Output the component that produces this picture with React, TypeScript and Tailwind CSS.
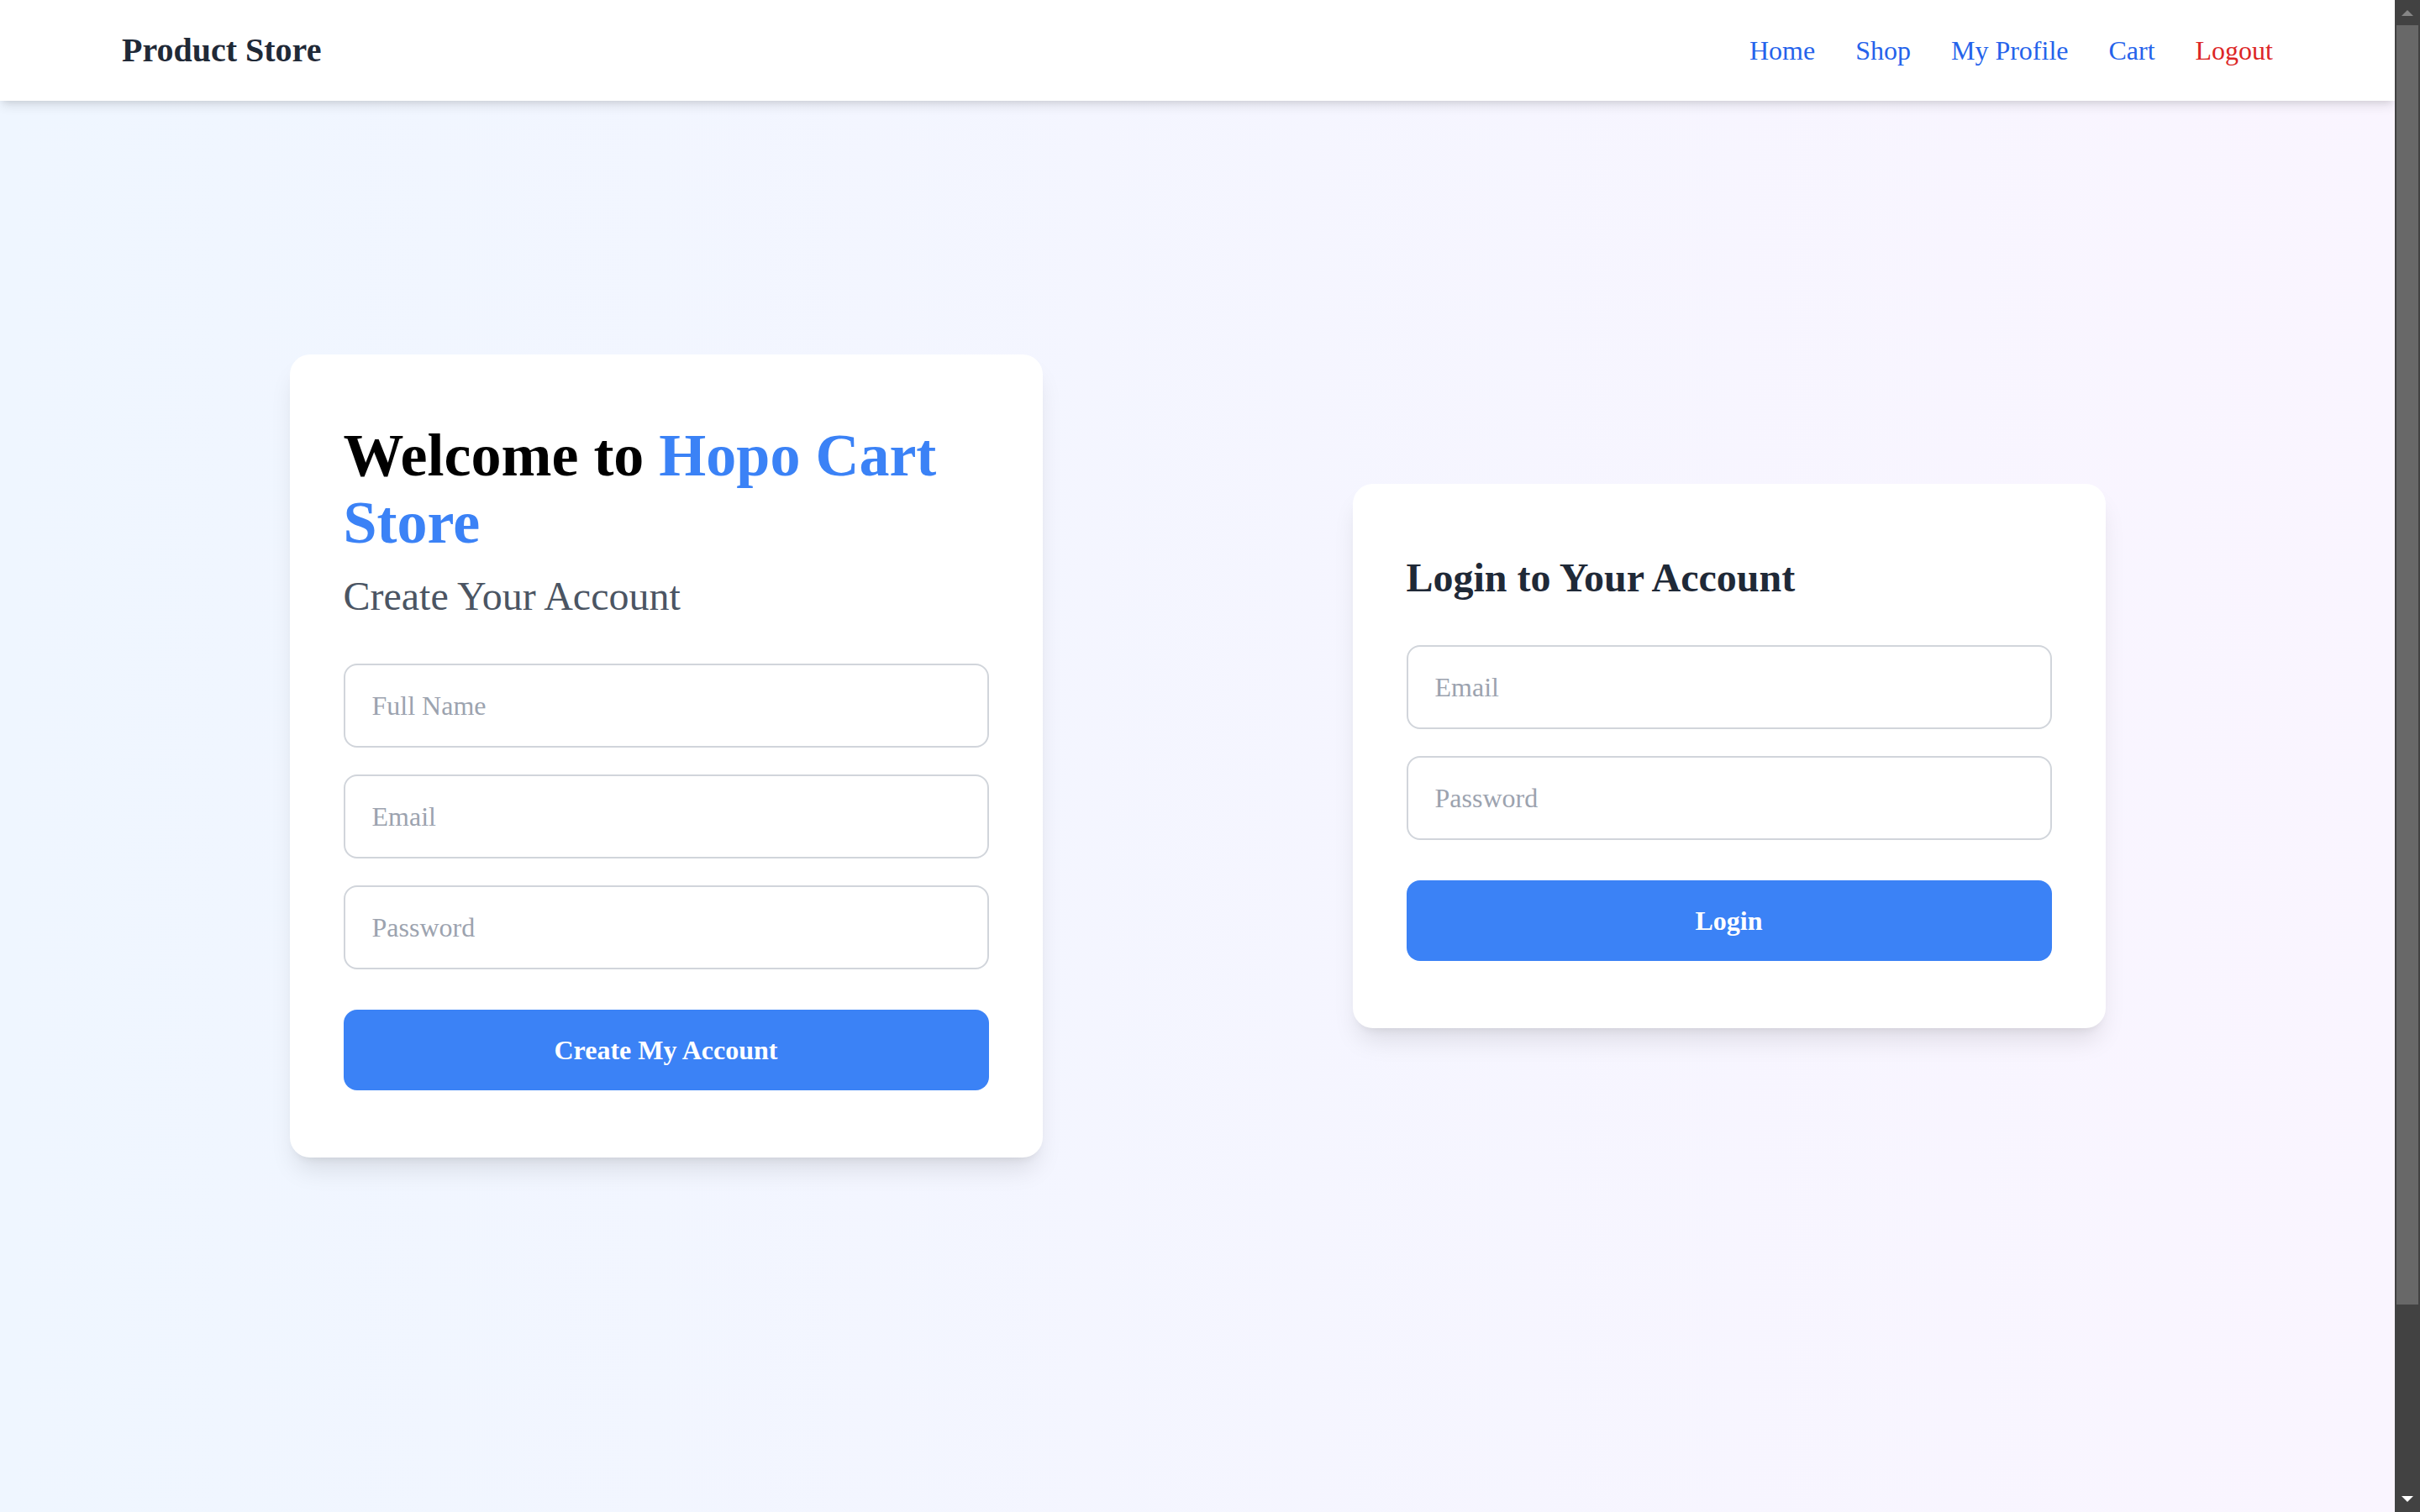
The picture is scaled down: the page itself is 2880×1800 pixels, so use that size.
import type { ReactNode } from "react";

type FieldProps = {
  label: string;
  type: "text" | "email" | "password";
};

const links = ["Home", "Shop", "My Profile", "Cart"];

function Field({ label, type }: FieldProps) {
  return (
    <input
      type={type}
      aria-label={label}
      placeholder={label}
      className="block w-full rounded-2xl border-2 border-[#d1d5db] bg-white px-8 py-6 text-[32px] leading-[48px] text-black placeholder:text-[#9ca3af] focus:border-[#3b82f6] focus:outline-none"
    />
  );
}

function SubmitButton({ children }: { children: string }) {
  return (
    <button
      type="submit"
      className="mt-4 w-full cursor-pointer rounded-2xl bg-[#3b82f6] py-6 text-[32px] leading-[48px] font-semibold text-white hover:bg-[#2563eb]"
    >
      {children}
    </button>
  );
}

function Card({ children }: { children: ReactNode }) {
  return (
    <section className="w-full max-w-4xl justify-self-center rounded-3xl bg-white px-16 py-20 shadow-[0_20px_30px_-6px_rgba(0,0,0,0.1),0_8px_12px_-8px_rgba(0,0,0,0.1)]">
      {children}
    </section>
  );
}

function Header() {
  return (
    <header className="bg-white shadow-[0_8px_12px_-2px_rgba(0,0,0,0.1),0_4px_8px_-4px_rgba(0,0,0,0.1)]">
      <div className="mx-auto flex max-w-[2560px] items-center justify-between py-8">
        <div className="text-[40px] leading-[56px] font-bold text-[#1f2937]">Product Store</div>
        <nav className="flex items-center gap-12 text-[32px] leading-[48px]">
          {links.map((link) => (
            <a key={link} href="#" className="text-[#2563eb] hover:underline">
              {link}
            </a>
          ))}
          <button type="button" className="cursor-pointer text-[#dc2626] hover:underline">
            Logout
          </button>
        </nav>
      </div>
    </header>
  );
}

function Scrollbar() {
  return (
    <div aria-hidden="true" className="sticky top-0 flex h-screen w-[30px] shrink-0 flex-col bg-[#424242]">
      <div className="flex h-[30px] items-center justify-center">
        <svg width="14" height="8" viewBox="0 0 14 8" className="fill-[#868686]">
          <path d="M7 1 14 8H0Z" />
        </svg>
      </div>
      <div className="flex-1 px-0.5">
        <div className="h-[87.5%] bg-[#686868]" />
      </div>
      <div className="flex h-[30px] items-center justify-center">
        <svg width="14" height="8" viewBox="0 0 14 8" className="fill-white">
          <path d="M0 0H14L7 7Z" />
        </svg>
      </div>
    </div>
  );
}

export default function App() {
  return (
    <div className="flex min-h-screen font-['Liberation_Serif',serif]">
      <div className="flex min-w-0 flex-1 flex-col bg-[linear-gradient(to_right,#eff6ff,#faf5ff)]">
        <Header />
        <main className="mx-auto grid w-full max-w-[2560px] flex-1 grid-cols-2 items-center gap-[34px] px-8 pb-[120px]">
          <Card>
            <h1 className="text-7xl leading-[80px] font-bold text-black">
              Welcome to <span className="text-[#3b82f6]">Hopo Cart Store</span>
            </h1>
            <p className="mt-4 text-5xl leading-[64px] text-[#4b5563]">Create Your Account</p>
            <form className="mt-12 flex flex-col gap-8" onSubmit={(e) => e.preventDefault()}>
              <Field label="Full Name" type="text" />
              <Field label="Email" type="email" />
              <Field label="Password" type="password" />
              <SubmitButton>Create My Account</SubmitButton>
            </form>
          </Card>
          <Card>
            <h2 className="text-5xl leading-[64px] font-bold text-[#1f2937]">Login to Your Account</h2>
            <form className="mt-12 flex flex-col gap-8" onSubmit={(e) => e.preventDefault()}>
              <Field label="Email" type="email" />
              <Field label="Password" type="password" />
              <SubmitButton>Login</SubmitButton>
            </form>
          </Card>
        </main>
      </div>
      <Scrollbar />
    </div>
  );
}
